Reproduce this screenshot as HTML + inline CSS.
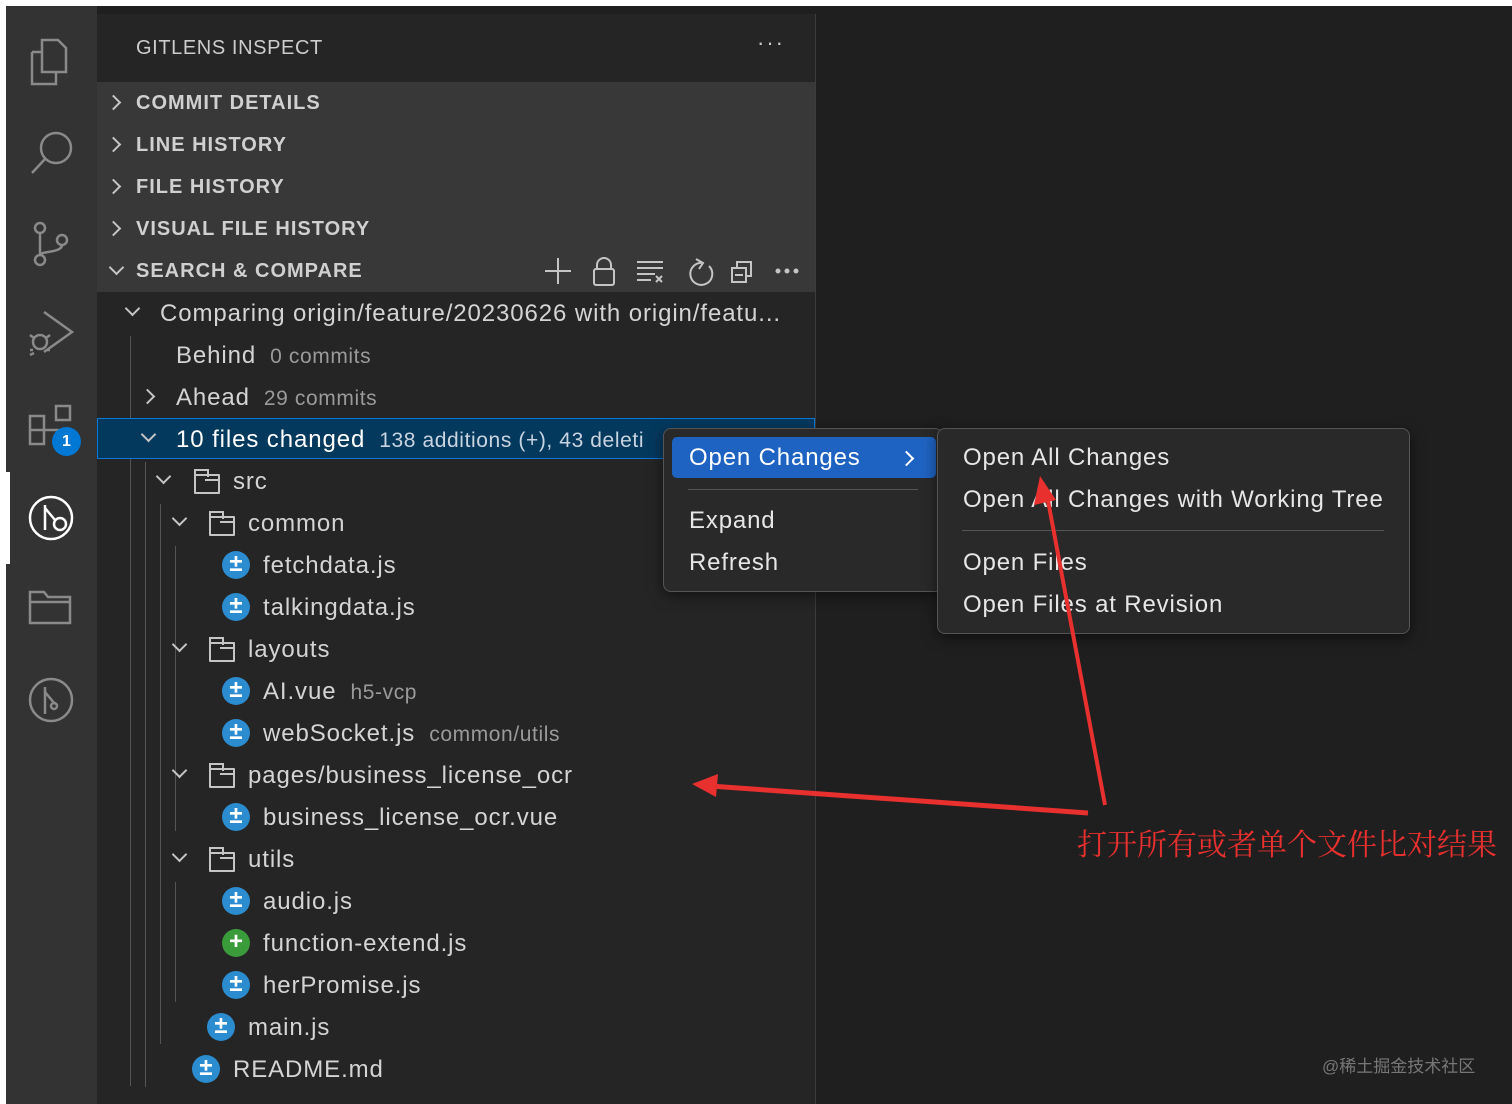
<!DOCTYPE html>
<html><head><meta charset="utf-8"><style>
*{margin:0;padding:0;box-sizing:border-box}
body{width:1512px;height:1104px;background:#fff;position:relative;overflow:hidden;font-family:"Liberation Sans","Noto Sans CJK SC",sans-serif;color:#ccc}
.a{position:absolute}
.t{position:absolute;font-size:24px;color:#d4d4d4;white-space:nowrap;line-height:30px;letter-spacing:0.9px}
.d{color:#9a9a9a;font-size:21px;letter-spacing:0.6px}
.h{position:absolute;font-size:20px;font-weight:bold;color:#d0d0d0;left:136px;line-height:24px;letter-spacing:1px}
.chev{position:absolute;width:11px;height:11px;border-right:2px solid #c5c5c5;border-bottom:2px solid #c5c5c5}
.cr{transform:rotate(-45deg)}
.cd{transform:rotate(45deg)}
.ic{position:absolute;width:28px;height:28px;border-radius:50%;background:#2b8ccf;color:#fff;font-size:24px;line-height:26px;text-align:center;font-weight:bold}
.fo{position:absolute;width:26px;height:20px;border:2px solid #c5c5c5;border-radius:1px}
.fo:before{content:"";position:absolute;left:-2px;top:-7px;width:11px;height:6px;border:2px solid #c5c5c5;border-bottom:none}
.fo:after{content:"";position:absolute;left:9px;top:3px;width:15px;height:0;border-top:2px solid #c5c5c5}
.gl{position:absolute;width:1px;background:#555}
.m{position:absolute;font-size:24px;color:#e6e6e6;white-space:nowrap;line-height:30px;letter-spacing:0.85px}
</style></head><body>
<div class="a" style="left:6px;top:6px;width:91px;height:1098px;background:#333"></div>
<div class="a" style="left:97px;top:6px;width:1415px;height:1098px;background:#1f1f1f"></div>
<div class="a" style="left:97px;top:14px;width:718px;height:68px;background:#252526"></div>
<div class="a" style="left:97px;top:82px;width:718px;height:210px;background:#383838"></div>
<div class="a" style="left:97px;top:292px;width:718px;height:812px;background:#252526"></div>
<div class="a" style="left:815px;top:14px;width:1px;height:1090px;background:#3c3c3c"></div>
<div class="a" style="left:6px;top:472px;width:4px;height:92px;background:#fff"></div>

<svg class="a" style="left:20px;top:30px" width="64" height="700" fill="none" stroke="#8a8a8a" stroke-width="2.5">
<path d="M22 10h16l8 8v24H22z M12 22h10 M12 22v32h24v-12"/>
<circle cx="36" cy="118" r="15"/><path d="M25 129L12 143"/>
<circle cx="20" cy="198" r="5"/><circle cx="20" cy="230" r="5"/><circle cx="42" cy="210" r="5"/><path d="M20 203v22 M42 215c0 8-22 6-22 10"/>
<path d="M24 282l28 20-28 20" /><circle cx="20" cy="312" r="7"/><path d="M10 305l4 3M10 320h3M10 325l4-2M30 305l-4 3M30 320h-3"/>
<path d="M10 386h14v14H10z M10 400h14v14H10z M24 400h14v14 M36 376h14v14H36z"/>
<circle cx="31" cy="488" r="21" stroke="#fff"/><path d="M25 475v25 M25 478l10 12" stroke="#fff"/><circle cx="40" cy="494" r="6" stroke="#fff"/>
<path d="M10 562h14l4 5h22v26H10z M10 572h40"/>
<circle cx="31" cy="670" r="21"/><path d="M25 657v27 M25 662l10 12" /><circle cx="34" cy="676" r="3"/>
</svg>
<div class="a" style="left:52px;top:427px;width:29px;height:29px;border-radius:50%;background:#0078d4;color:#fff;font-size:16px;font-weight:bold;text-align:center;line-height:29px">1</div>

<div class="a" style="left:136px;top:37px;font-size:20px;color:#ccc;letter-spacing:0.6px">GITLENS INSPECT</div>
<div class="a" style="left:757px;top:30px;font-size:22px;color:#ccc;letter-spacing:2px">···</div>

<div class="chev cr" style="left:108px;top:97px"></div><div class="h" style="top:91px">COMMIT DETAILS</div>
<div class="chev cr" style="left:108px;top:139px"></div><div class="h" style="top:133px">LINE HISTORY</div>
<div class="chev cr" style="left:108px;top:181px"></div><div class="h" style="top:175px">FILE HISTORY</div>
<div class="chev cr" style="left:108px;top:223px"></div><div class="h" style="top:217px">VISUAL FILE HISTORY</div>
<div class="chev cd" style="left:111px;top:262px"></div><div class="h" style="top:259px">SEARCH &amp; COMPARE</div>
<svg class="a" style="left:540px;top:254px" width="270" height="34" fill="none" stroke="#c5c5c5" stroke-width="2">
<path d="M18 4v26M5 17h26"/>
<rect x="54" y="15" width="20" height="16" rx="2"/><path d="M57 15v-4a7 7 0 0 1 14 0v4"/>
<path d="M97 8h26M97 14h26M97 20h18M97 26h14M116 22l6 6M122 22l-6 6"/>
<path d="M163 9a11 11 0 1 0 6 3 M156 5l7 4-4 6"/>
<rect x="192" y="14" width="14" height="14"/><path d="M197 14V8h14v14h-5 M195 21h8"/>
<circle cx="238" cy="17" r="1.5" fill="#c5c5c5"/><circle cx="247" cy="17" r="1.5" fill="#c5c5c5"/><circle cx="256" cy="17" r="1.5" fill="#c5c5c5"/>
</svg>

<div class="gl" style="left:130px;top:336px;height:750px"></div>
<div class="gl" style="left:145px;top:462px;height:625px"></div>
<div class="gl" style="left:160px;top:504px;height:540px"></div>
<div class="gl" style="left:175px;top:546px;height:285px"></div>
<div class="gl" style="left:175px;top:882px;height:120px"></div>

<div class="chev cd" style="left:127px;top:303px"></div><div class="t" style="left:160px;top:299px">Comparing origin/feature/20230626 with origin/featu...</div>
<div class="t" style="left:176px;top:341px">Behind <span class="d">&nbsp;0 commits</span></div>
<div class="chev cr" style="left:142px;top:391px"></div><div class="t" style="left:176px;top:383px">Ahead <span class="d">&nbsp;29 commits</span></div>
<div class="a" style="left:97px;top:418px;width:718px;height:41px;background:#04395e;border:1px solid #0a78d4"></div>
<div class="chev cd" style="left:143px;top:429px"></div><div class="t" style="left:176px;top:425px;color:#fff">10 files changed <span class="d" style="color:#c8d4e0">&nbsp;138 additions (+), 43 deleti</span></div>

<div class="chev cd" style="left:158px;top:471px"></div><div class="fo" style="left:194px;top:474px"></div><div class="t" style="left:233px;top:467px">src</div>
<div class="chev cd" style="left:174px;top:513px"></div><div class="fo" style="left:209px;top:516px"></div><div class="t" style="left:248px;top:509px">common</div>
<div class="ic" style="left:222px;top:551px">±</div><div class="t" style="left:263px;top:551px">fetchdata.js</div>
<div class="ic" style="left:222px;top:593px">±</div><div class="t" style="left:263px;top:593px">talkingdata.js</div>
<div class="chev cd" style="left:174px;top:639px"></div><div class="fo" style="left:209px;top:642px"></div><div class="t" style="left:248px;top:635px">layouts</div>
<div class="ic" style="left:222px;top:677px">±</div><div class="t" style="left:263px;top:677px">AI.vue <span class="d">&nbsp;h5-vcp</span></div>
<div class="ic" style="left:222px;top:719px">±</div><div class="t" style="left:263px;top:719px">webSocket.js <span class="d">&nbsp;common/utils</span></div>
<div class="chev cd" style="left:174px;top:765px"></div><div class="fo" style="left:209px;top:768px"></div><div class="t" style="left:248px;top:761px">pages/business_license_ocr</div>
<div class="ic" style="left:222px;top:803px">±</div><div class="t" style="left:263px;top:803px">business_license_ocr.vue</div>
<div class="chev cd" style="left:174px;top:849px"></div><div class="fo" style="left:209px;top:852px"></div><div class="t" style="left:248px;top:845px">utils</div>
<div class="ic" style="left:222px;top:887px">±</div><div class="t" style="left:263px;top:887px">audio.js</div>
<div class="ic" style="left:222px;top:929px;background:#3a9b3a">+</div><div class="t" style="left:263px;top:929px">function-extend.js</div>
<div class="ic" style="left:222px;top:971px">±</div><div class="t" style="left:263px;top:971px">herPromise.js</div>
<div class="ic" style="left:207px;top:1013px">±</div><div class="t" style="left:248px;top:1013px">main.js</div>
<div class="ic" style="left:192px;top:1055px">±</div><div class="t" style="left:233px;top:1055px">README.md</div>

<div class="a" style="left:663px;top:428px;width:280px;height:164px;background:#292929;border:1px solid #555;border-radius:8px;box-shadow:0 4px 14px rgba(0,0,0,.5)"></div>
<div class="a" style="left:672px;top:437px;width:264px;height:41px;background:#1f63c2;border-radius:5px"></div>
<div class="m" style="left:689px;top:443px;color:#fff">Open Changes</div>
<div class="chev cr" style="left:901px;top:453px;border-color:#fff"></div>
<div class="a" style="left:688px;top:489px;width:230px;height:1px;background:#555"></div>
<div class="m" style="left:689px;top:506px">Expand</div>
<div class="m" style="left:689px;top:548px">Refresh</div>

<div class="a" style="left:937px;top:428px;width:473px;height:206px;background:#292929;border:1px solid #555;border-radius:8px;box-shadow:0 4px 14px rgba(0,0,0,.5)"></div>
<div class="m" style="left:963px;top:443px">Open All Changes</div>
<div class="m" style="left:963px;top:485px">Open All Changes with Working Tree</div>
<div class="a" style="left:962px;top:530px;width:422px;height:1px;background:#555"></div>
<div class="m" style="left:963px;top:548px">Open Files</div>
<div class="m" style="left:963px;top:590px">Open Files at Revision</div>

<svg class="a" style="left:0;top:0" width="1512" height="1104">
<path d="M1105 805 L1046 490" stroke="#e8302f" stroke-width="4" fill="none"/>
<path d="M1040 476 L1034 505 L1056 500 Z" fill="#e8302f"/>
<path d="M1088 813 L710 786" stroke="#e8302f" stroke-width="5" fill="none"/>
<path d="M692 784 L718 774 L716 797 Z" fill="#e8302f"/>
</svg>
<div class="a" style="left:1077px;top:820px;font-size:30px;color:#e8302f;font-family:'Noto Serif CJK SC','Noto Sans CJK SC',serif;white-space:nowrap">打开所有或者单个文件比对结果</div>
<div class="a" style="left:1322px;top:1052px;font-size:17px;color:#777;font-family:'Liberation Sans','Noto Sans CJK SC',sans-serif">@稀土掘金技术社区</div>
</body></html>
